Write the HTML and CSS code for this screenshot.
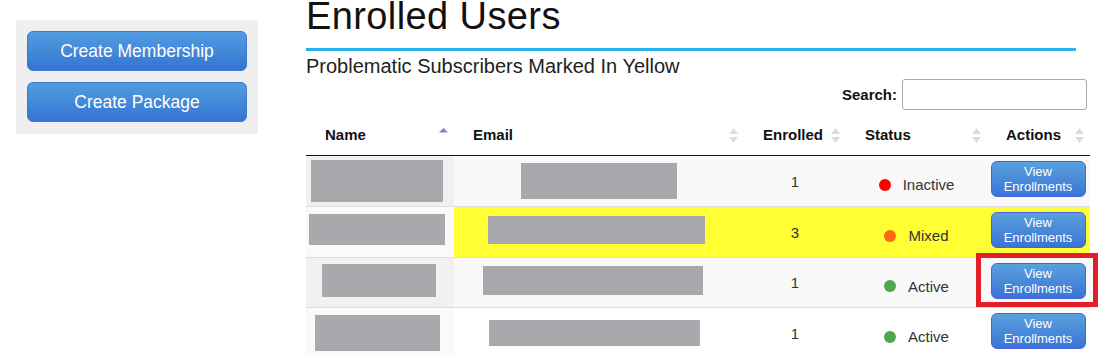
FILE: index.html
```html
<!DOCTYPE html>
<html lang="en">

<head>
    <meta charset="UTF-8">
    <meta name="viewport" content="width=device-width, initial-scale=1.0">
    <title>Enrolled Users</title>
    <link rel="stylesheet" href="styles.css">
</head>

<body>
    <div class="page">
        <div class="sidebar">
            <button class="side-btn">Create Membership</button>
            <button class="side-btn">Create Package</button>
        </div>

        <div class="main">
            <h1 class="title">Enrolled Users</h1>
            <p class="subtitle">Problematic Subscribers Marked In Yellow</p>

            <div class="search-row">
                <label for="search">Search:</label>
                <input type="text" id="search">
            </div>

            <table class="users">
                <thead>
                    <tr>
                        <th class="col-name">
                            <div class="th-inner">Name
                                <svg class="sort" viewBox="0 0 9 15"><polygon points="0,4.5 4.5,0 9,4.5" fill="#7a80d8"/></svg>
                            </div>
                        </th>
                        <th class="col-email">
                            <div class="th-inner">Email
                                <svg class="sort" viewBox="0 0 9 15"><polygon points="0,6 4.5,0 9,6" fill="#dcdcdc"/><polygon points="0,9 9,9 4.5,15" fill="#dcdcdc"/></svg>
                            </div>
                        </th>
                        <th class="col-enrolled">
                            <div class="th-inner">Enrolled
                                <svg class="sort" viewBox="0 0 9 15"><polygon points="0,6 4.5,0 9,6" fill="#dcdcdc"/><polygon points="0,9 9,9 4.5,15" fill="#dcdcdc"/></svg>
                            </div>
                        </th>
                        <th class="col-status">
                            <div class="th-inner">Status
                                <svg class="sort" viewBox="0 0 9 15"><polygon points="0,6 4.5,0 9,6" fill="#dcdcdc"/><polygon points="0,9 9,9 4.5,15" fill="#dcdcdc"/></svg>
                            </div>
                        </th>
                        <th class="col-actions">
                            <div class="th-inner">Actions
                                <svg class="sort" viewBox="0 0 9 15"><polygon points="0,6 4.5,0 9,6" fill="#dcdcdc"/><polygon points="0,9 9,9 4.5,15" fill="#dcdcdc"/></svg>
                            </div>
                        </th>
                    </tr>
                </thead>
                <tbody>
                    <tr class="odd">
                        <td class="sorting"><div class="redact n1"></div></td>
                        <td><div class="redact e1"></div></td>
                        <td>1</td>
                        <td><span class="status"><span class="dot inactive"></span>Inactive</span></td>
                        <td class="actions"><button class="view-btn">View<br>Enrollments</button></td>
                    </tr>
                    <tr class="even problem">
                        <td class="sorting"><div class="redact n2"></div></td>
                        <td><div class="redact e2"></div></td>
                        <td>3</td>
                        <td><span class="status"><span class="dot mixed"></span>Mixed</span></td>
                        <td class="actions"><button class="view-btn">View<br>Enrollments</button></td>
                    </tr>
                    <tr class="odd short">
                        <td class="sorting"><div class="redact n3"></div></td>
                        <td><div class="redact e3"></div></td>
                        <td>1</td>
                        <td><span class="status"><span class="dot active"></span>Active</span></td>
                        <td class="actions">
                            <div class="marked">
                                <button class="view-btn">View<br>Enrollments</button>
                                <span class="highlight"></span>
                            </div>
                        </td>
                    </tr>
                    <tr class="even">
                        <td class="sorting"><div class="redact n4"></div></td>
                        <td><div class="redact e4"></div></td>
                        <td>1</td>
                        <td><span class="status"><span class="dot active"></span>Active</span></td>
                        <td class="actions"><button class="view-btn">View<br>Enrollments</button></td>
                    </tr>
                </tbody>
            </table>
        </div>
    </div>
</body>

</html>
```

FILE: styles.css
```css
body {
    margin: 0;
    font-family: "Liberation Sans", Arial, sans-serif;
    color: #222;
    background-color: white;
}

.page {
    display: flex;
    align-items: flex-start;
}

.sidebar {
    display: flex;
    flex-direction: column;
    gap: 11px;
    width: 220px;
    padding: 11px 11px 12px 11px;
    margin: 20px 0 0 16px;
    background-color: #efefef;
}

.side-btn {
    height: 40px;
    font-family: inherit;
    font-size: 17.5px;
    color: white;
    background: linear-gradient(#519de0, #3574d3);
    border: 1px solid #3d78cf;
    border-radius: 6px;
    cursor: pointer;
}

.main {
    width: 784px;
    margin-left: 48px;
}

.title {
    margin: 0 14px 0 0;
    padding-bottom: 16px;
    font-size: 38px;
    font-weight: normal;
    letter-spacing: 0.4px;
    line-height: 32px;
    color: #111;
    border-bottom: 3px solid #29b3ee;
}

.subtitle {
    margin: 5px 0 0 0;
    font-size: 20px;
    line-height: 21px;
    color: #222;
}

.search-row {
    display: flex;
    justify-content: flex-end;
    align-items: center;
    gap: 5px;
    margin: 2px 3px 0 0;
}

.search-row label {
    font-size: 15px;
    font-weight: bold;
    color: #111;
}

.search-row input {
    width: 185px;
    height: 31px;
    box-sizing: border-box;
    border: 1px solid #aaa;
    border-radius: 3px;
}

.users {
    width: 784px;
    margin-top: 5px;
    border-collapse: separate;
    border-spacing: 0;
    table-layout: fixed;
}

.users th {
    box-sizing: border-box;
    padding: 10px 6px 12px 19px;
    font-size: 15px;
    line-height: 17px;
    font-weight: bold;
    text-align: left;
    color: #111;
    border-bottom: 1px solid #111;
}

.th-inner {
    display: flex;
    justify-content: space-between;
    align-items: center;
}

.sort {
    flex-shrink: 0;
    width: 9px;
    height: 15px;
    margin-top: 3px;
}

.col-name { width: 148px; }
.col-email { width: 290px; }
.col-enrolled { width: 102px; }
.col-status { width: 141px; }
.col-actions { width: 103px; }

.users td {
    height: 50px;
    padding: 0 10px;
    font-size: 15px;
    text-align: center;
    vertical-align: middle;
    color: #333;
    border-bottom: 1px solid #ddd;
}

.users tr.short td {
    height: 49px;
}

.users td.sorting {
    padding: 0 6px 0 0;
}

.users td.actions {
    padding: 0 1px 0 0;
}

.users tr.odd td {
    background-color: #f9f9f9;
}

.users tr.odd td.sorting {
    background-color: #f1f1f1;
}

.users tr.even td {
    background-color: white;
}

.users tr.even td.sorting {
    background-color: #fafafa;
}

.users tr.problem td {
    background-color: #ffff33;
}

.users tr.problem td.sorting {
    background-color: #fafafa;
}

.redact {
    margin: 0 auto;
    background-color: #a8a9ad;
}

.n1 { width: 132px; height: 42px; }
.n2 { width: 136px; height: 31px; margin-top: -5px; }
.n3 { width: 114px; height: 33px; margin-top: -4px; position: relative; left: 2px; }
.n4 { width: 125px; height: 36px; }

.e1 { width: 156px; height: 36px; }
.e2 { width: 217px; height: 28px; margin-top: -5px; position: relative; left: -3px; }
.e3 { width: 220px; height: 29px; margin-top: -4px; position: relative; left: -6px; }
.e4 { width: 211px; height: 26px; position: relative; left: -5px; }

.status {
    display: inline-flex;
    align-items: center;
    gap: 12px;
    padding-top: 8px;
    color: #333;
}

.dot {
    width: 12px;
    height: 12px;
    border-radius: 50%;
}

.dot.inactive { background-color: #ff0000; }
.dot.mixed { background-color: #ff6611; }
.dot.active { background-color: #4ea64f; }

.view-btn {
    display: block;
    width: 95px;
    height: 36px;
    margin: 0 auto 4px auto;
    padding: 0;
    font-family: inherit;
    font-size: 13px;
    line-height: 15px;
    color: white;
    background: linear-gradient(#5aa0dc, #3a74d6);
    border: 1px solid #4a60de;
    border-radius: 6px;
    cursor: pointer;
}

.marked {
    position: relative;
    width: 95px;
    margin: 0 auto 4px auto;
}

.marked .view-btn {
    margin: 0;
}

.highlight {
    position: absolute;
    top: -10px;
    left: -15px;
    right: -12px;
    bottom: -8px;
    border: 5px solid #e21e26;
}
```
